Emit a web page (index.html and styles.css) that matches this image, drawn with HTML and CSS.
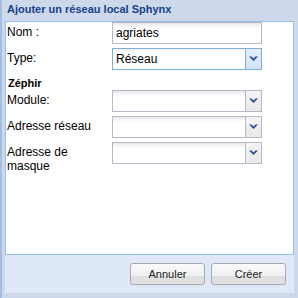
FILE: index.html
```html
<!DOCTYPE html>
<html lang="fr">
<head>
<meta charset="utf-8">
<title>Ajouter un réseau local Sphynx</title>
<link rel="stylesheet" href="styles.css">
</head>
<body>
<div class="win">
  <div class="win-header">Ajouter un réseau local Sphynx</div>
  <div class="win-body">
    <div class="row">
      <div class="label">Nom :</div>
      <div class="field"><span class="value">agriates</span></div>
    </div>
    <div class="row">
      <div class="label">Type:</div>
      <div class="field combo focus"><span class="value">Réseau</span>
        <span class="trigger"><svg width="9" height="6" viewBox="0 0 9 6"><polygon points="0,0.5 2.5,0.5 4.5,2.5 6.5,0.5 9,0.5 4.5,5" fill="#2a4f8f"/></svg></span>
      </div>
    </div>
    <div class="section">Zéphir</div>
    <div class="row">
      <div class="label">Module:</div>
      <div class="field combo"><span class="value"></span>
        <span class="trigger"><svg width="9" height="6" viewBox="0 0 9 6"><polygon points="0,0.5 2.5,0.5 4.5,2.5 6.5,0.5 9,0.5 4.5,5" fill="#2a4f8f"/></svg></span>
      </div>
    </div>
    <div class="row">
      <div class="label">Adresse réseau</div>
      <div class="field combo"><span class="value"></span>
        <span class="trigger"><svg width="9" height="6" viewBox="0 0 9 6"><polygon points="0,0.5 2.5,0.5 4.5,2.5 6.5,0.5 9,0.5 4.5,5" fill="#2a4f8f"/></svg></span>
      </div>
    </div>
    <div class="row">
      <div class="label">Adresse de masque</div>
      <div class="field combo"><span class="value"></span>
        <span class="trigger"><svg width="9" height="6" viewBox="0 0 9 6"><polygon points="0,0.5 2.5,0.5 4.5,2.5 6.5,0.5 9,0.5 4.5,5" fill="#2a4f8f"/></svg></span>
      </div>
    </div>
  </div>
  <div class="win-footer">
    <button class="btn" type="button">Annuler</button>
    <button class="btn" type="button">Créer</button>
  </div>
</div>
</body>
</html>
```
FILE: styles.css
```css
html, body {
  margin: 0;
  padding: 0;
}
body {
  background: #cdd9ea;
  font-family: "Liberation Sans", Arial, sans-serif;
}
.win {
  box-sizing: border-box;
  width: 298px;
  height: 298px;
  background: #cdd9ea;
  border-left: 2px solid #a4bde0;
  padding: 0 4px 5px 3px;
  display: flex;
  flex-direction: column;
}
.win-header {
  height: 21px;
  box-sizing: border-box;
  padding: 3px 0 0 2px;
  font-size: 11px;
  line-height: 13px;
  font-weight: bold;
  color: #15428b;
  white-space: nowrap;
}
.win-body {
  box-sizing: border-box;
  height: 234px;
  background: #fff;
  border: 1px solid #99bbe8;
  padding: 0 0 0 1px;
}
.row {
  display: flex;
  align-items: flex-start;
  margin-bottom: 4px;
  min-height: 22px;
}
.label {
  width: 100px;
  padding-top: 3px;
  margin-right: 5px;
  font-size: 12px;
  line-height: 14px;
  color: #000;
}
.field {
  position: relative;
  box-sizing: border-box;
  width: 150px;
  height: 22px;
  border: 1px solid #b5b8c8;
  background: linear-gradient(to bottom, #e9e9e9 0, #ffffff 5px);
  padding-left: 3px;
  font-size: 12px;
  line-height: 20px;
  color: #000;
}
.field.focus {
  border-color: #7eadd9;
  background: linear-gradient(to bottom, #f2f2f2 0, #ffffff 4px);
}
.trigger {
  position: absolute;
  top: 0;
  right: 0;
  box-sizing: border-box;
  width: 16px;
  height: 20px;
  border-left: 1px solid #b5b8c8;
  background: linear-gradient(to bottom, #f4f4f4, #e9e9e9);
  display: flex;
  align-items: center;
  justify-content: center;
}
.trigger svg {
  display: block;
}
.focus .trigger {
  border-left-color: #7eadd9;
  background: linear-gradient(to bottom, #e4eefb, #d3e3f8);
}
.section {
  padding: 3px 0 0 1px;
  height: 13px;
  font-size: 11px;
  line-height: 13px;
  font-weight: bold;
  color: #000;
}
.win-footer {
  flex: 1;
  background: #dfe8f6;
  display: flex;
  justify-content: flex-end;
  align-items: flex-start;
  gap: 6px;
  padding: 8px 8px 0 0;
}
.btn {
  box-sizing: border-box;
  width: 75px;
  height: 22px;
  margin: 0;
  padding: 0;
  border: 1px solid #a9a9a9;
  border-radius: 3px;
  background: linear-gradient(to bottom, #fbfbfb 0, #efefef 60%, #dedede 61%, #e2e2e2 100%);
  font-family: "Liberation Sans", Arial, sans-serif;
  font-size: 11px;
  color: #222;
  line-height: 20px;
}
```
